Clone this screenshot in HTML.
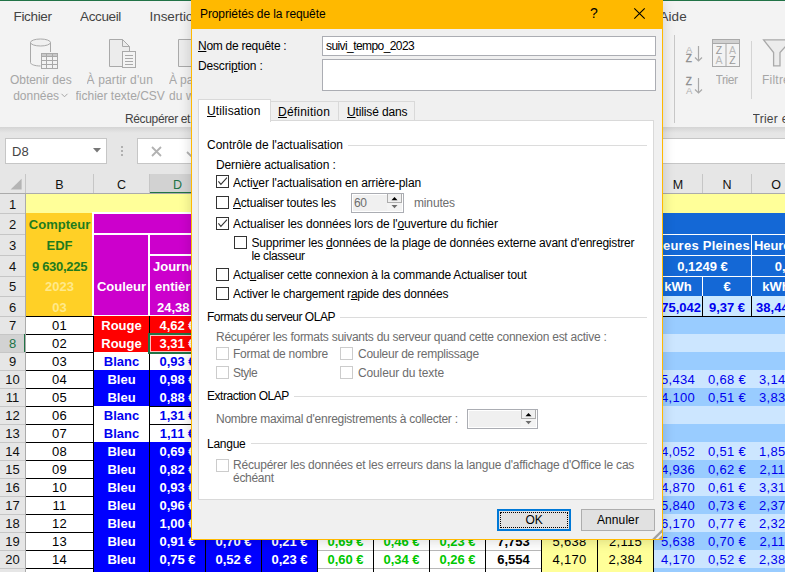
<!DOCTYPE html><html lang="fr"><head><meta charset="utf-8"><title>Propriétés de la requête</title>
<style>
html,body{margin:0;padding:0;}
body{width:785px;height:572px;overflow:hidden;position:relative;background:#e6e6e6;font-family:"Liberation Sans", sans-serif;}
div,span{position:absolute;box-sizing:border-box;}
.t{white-space:nowrap;overflow:hidden;}
svg{position:absolute;overflow:visible;}
u{text-decoration:underline;text-underline-offset:1px;}
.dlg .t{font-size:12px;letter-spacing:-0.2px;color:#000;}
.cb{width:13px;height:13px;background:#fff;border:1px solid #333;}
.cb.dis{border-color:#ccc;background:#fff;}
</style></head><body>
<div id="xl" style="left:0;top:0;width:785px;height:572px;">
<div style="left:0px;top:0px;width:785px;height:127px;background:#f3f3f3;"></div>
<div style="left:0px;top:0px;width:785px;height:1px;background:#217346;"></div>
<div style="left:0px;top:127px;width:785px;height:6px;background:linear-gradient(#d4d4d4,#e6e6e6);"></div>
<div class="t" style="left:13.5px;top:7px;width:300px;height:20px;line-height:20px;color:#444;font-size:13.5px;text-align:left;letter-spacing:-0.33px;">Fichier</div>
<div class="t" style="left:80px;top:7px;width:300px;height:20px;line-height:20px;color:#444;font-size:13.5px;text-align:left;letter-spacing:-0.36px;">Accueil</div>
<div class="t" style="left:149.5px;top:7px;width:300px;height:20px;line-height:20px;color:#444;font-size:13.5px;text-align:left;letter-spacing:-0.06px;">Insertion</div>
<div class="t" style="left:659.5px;top:7px;width:300px;height:20px;line-height:20px;color:#444;font-size:13.5px;text-align:left;letter-spacing:0.04px;">Aide</div>
<div class="t" style="left:10px;top:72px;width:300px;height:16px;line-height:16px;color:#a6a6a6;font-size:12px;text-align:left;letter-spacing:-0.04px;">Obtenir des</div>
<div class="t" style="left:13.2px;top:88px;width:300px;height:16px;line-height:16px;color:#a6a6a6;font-size:12px;text-align:left;letter-spacing:-0.02px;">données</div>
<svg style="left:61px;top:93px" width="7" height="5" viewBox="0 0 7 5" fill="none" stroke="#a6a6a6" stroke-width="1"><path d="M0.5 0.8L3.5 3.8L6.5 0.8"/></svg>
<div class="t" style="left:86.5px;top:72px;width:300px;height:16px;line-height:16px;color:#a6a6a6;font-size:12px;text-align:left;letter-spacing:0.17px;">À partir d'un</div>
<div class="t" style="left:75.5px;top:88px;width:300px;height:16px;line-height:16px;color:#a6a6a6;font-size:12px;text-align:left;letter-spacing:0.0px;">fichier texte/CSV</div>
<div class="t" style="left:169px;top:72px;width:300px;height:16px;line-height:16px;color:#a6a6a6;font-size:12px;text-align:left;letter-spacing:-0.11px;">À partir du</div>
<div class="t" style="left:169px;top:88px;width:300px;height:16px;line-height:16px;color:#a6a6a6;font-size:12px;text-align:left;letter-spacing:0.08px;">du web</div>
<div class="t" style="left:125px;top:111px;width:300px;height:16px;line-height:16px;color:#444;font-size:12px;text-align:left;letter-spacing:-0.36px;">Récupérer et transformer des données</div>
<div class="t" style="left:752.5px;top:111px;width:300px;height:16px;line-height:16px;color:#444;font-size:12px;text-align:left;letter-spacing:0.27px;">Trier et filtrer</div>
<div class="t" style="left:715.5px;top:72px;width:300px;height:16px;line-height:16px;color:#a6a6a6;font-size:12px;text-align:left;letter-spacing:-0.4px;">Trier</div>
<div class="t" style="left:762px;top:72px;width:300px;height:16px;line-height:16px;color:#a6a6a6;font-size:12px;text-align:left;letter-spacing:0.22px;">Filtrer</div>
<div style="left:674px;top:35px;width:1px;height:88px;background:#c8c8c8;"></div>
<div style="left:751px;top:41px;width:1px;height:58px;background:#d4d4d4;"></div>
<svg style="left:28px;top:37px" width="32" height="34" viewBox="0 0 32 34" fill="none" stroke="#a9a9a9" stroke-width="1">
<ellipse cx="12.5" cy="5.5" rx="10" ry="3.5" fill="#f0f0f0"/>
<path d="M2.5 5.5V25.5C2.5 27.5 7 29 12.5 29"/><path d="M22.5 5.5V15"/>
<rect x="13.5" y="16.5" width="16" height="15" fill="#f3f3f3"/>
<rect x="13.5" y="16.5" width="16" height="3" fill="#c8c8c8"/>
<path d="M13.5 19.5H29.5M13.5 23.5H29.5M13.5 27.5H29.5M18.5 16.5V31.5M24.5 16.5V31.5"/></svg>
<svg style="left:108px;top:37px" width="32" height="34" viewBox="0 0 32 34" fill="none" stroke="#a9a9a9" stroke-width="1">
<path d="M1.5 2.5H14.5L21.5 9.5V29.5H1.5Z" fill="#ececec"/><path d="M14.5 2.5V9.5H21.5"/>
<rect x="14.5" y="14.5" width="13" height="16" fill="#f3f3f3"/>
<path d="M17 18.5H25M17 21.5H25M17 24.5H25M17 27.5H25"/></svg>
<svg style="left:177px;top:37px" width="32" height="34" viewBox="0 0 32 34" fill="none" stroke="#a9a9a9" stroke-width="1">
<path d="M1.5 2.5H14.5L21.5 9.5V29.5H1.5Z" fill="#ececec"/></svg>
<svg style="left:685px;top:44px" width="20" height="20" viewBox="0 0 20 20" fill="none" stroke="#a9a9a9" stroke-width="1.2">
<path d="M13.5 2V17M10 13.5L13.5 17L17 13.5"/>
<text x="1" y="9" font-family="Liberation Sans, sans-serif" font-size="9.5" fill="#b0b0b0" stroke="none">A</text>
<text x="0.8" y="18" font-family="Liberation Sans, sans-serif" font-size="10" fill="#8c8c8c" stroke="#8c8c8c" stroke-width="0.3">Z</text></svg>
<svg style="left:685px;top:76px" width="20" height="20" viewBox="0 0 20 20" fill="none" stroke="#a9a9a9" stroke-width="1.2">
<path d="M13.5 2V17M10 13.5L13.5 17L17 13.5"/>
<text x="0.8" y="9" font-family="Liberation Sans, sans-serif" font-size="10" fill="#8c8c8c" stroke="#8c8c8c" stroke-width="0.3">Z</text>
<text x="1" y="18" font-family="Liberation Sans, sans-serif" font-size="9.5" fill="#b0b0b0" stroke="none">A</text></svg>
<svg style="left:712px;top:39px" width="29" height="29" viewBox="0 0 29 29" fill="none" stroke="#a9a9a9" stroke-width="1">
<rect x="0.5" y="0.5" width="27" height="27" fill="#f3f3f3"/><rect x="0.5" y="0.5" width="27" height="4" fill="#d0d0d0"/>
<path d="M14 4.5V27.5"/>
<g font-family="Liberation Sans, sans-serif" font-size="10.5" stroke="none"><text x="3.8" y="15" fill="#999">Z</text><text x="3.5" y="25.2" fill="#b8b8b8">A</text><text x="17" y="15" fill="#b8b8b8">A</text><text x="17.3" y="25.2" fill="#999">Z</text></g></svg>
<svg style="left:763px;top:39px" width="30" height="28" viewBox="0 0 30 28" fill="none" stroke="#a9a9a9" stroke-width="1.3">
<path d="M0.6 0.9H28.4L17 13.5V26.8H10.6V13.5Z" fill="#ececec"/></svg>
<div style="left:5px;top:138px;width:102px;height:26px;background:#fff;border:1px solid #c6c6c6;"></div>
<div class="t" style="left:12px;top:143px;width:40px;height:18px;line-height:18px;color:#444;font-size:13px;text-align:left;">D8</div>
<svg style="left:93px;top:148px" width="8" height="5" viewBox="0 0 8 5"><path d="M0 0H8L4 4.5Z" fill="#777"/></svg>
<div style="left:121px;top:146px;width:2px;height:2px;background:#b0b0b0;"></div>
<div style="left:121px;top:150px;width:2px;height:2px;background:#b0b0b0;"></div>
<div style="left:121px;top:154px;width:2px;height:2px;background:#b0b0b0;"></div>
<div style="left:137px;top:138px;width:660px;height:26px;background:#fff;border:1px solid #c6c6c6;"></div>
<svg style="left:150.5px;top:146px" width="11" height="11" viewBox="0 0 11 11" stroke="#b2b2b2" stroke-width="1.8" fill="none"><path d="M1 1L10 10M10 1L1 10"/></svg>
<svg style="left:186px;top:146px" width="14" height="11" viewBox="0 0 14 11" stroke="#b2b2b2" stroke-width="1.8" fill="none"><path d="M1 6L5 10L13 1"/></svg>
<div style="left:0px;top:174px;width:785px;height:20px;background:#e6e6e6;"></div>
<svg style="left:10px;top:178px" width="12" height="12" viewBox="0 0 12 12"><path d="M11.6 0.8V11.5H0.6Z" fill="#b4b4b4"/></svg>
<div class="t" style="left:26px;top:176px;width:67px;height:18px;line-height:18px;color:#111;font-size:12.5px;text-align:center;">B</div>
<div style="left:93px;top:174px;width:1px;height:20px;background:#c6c6c6;"></div>
<div class="t" style="left:94px;top:176px;width:55px;height:18px;line-height:18px;color:#111;font-size:12.5px;text-align:center;">C</div>
<div style="left:149px;top:174px;width:1px;height:20px;background:#c6c6c6;"></div>
<div style="left:150px;top:174px;width:55px;height:20px;background:#d2d2d2;border-bottom:2px solid #217346;"></div>
<div class="t" style="left:150px;top:176px;width:55px;height:18px;line-height:18px;color:#217346;font-size:12.5px;text-align:center;">D</div>
<div style="left:205px;top:174px;width:1px;height:20px;background:#c6c6c6;"></div>
<div class="t" style="left:206px;top:176px;width:55px;height:18px;line-height:18px;color:#111;font-size:12.5px;text-align:center;">E</div>
<div style="left:261px;top:174px;width:1px;height:20px;background:#c6c6c6;"></div>
<div class="t" style="left:262px;top:176px;width:55px;height:18px;line-height:18px;color:#111;font-size:12.5px;text-align:center;">F</div>
<div style="left:317px;top:174px;width:1px;height:20px;background:#c6c6c6;"></div>
<div class="t" style="left:318px;top:176px;width:55px;height:18px;line-height:18px;color:#111;font-size:12.5px;text-align:center;">G</div>
<div style="left:373px;top:174px;width:1px;height:20px;background:#c6c6c6;"></div>
<div class="t" style="left:374px;top:176px;width:55px;height:18px;line-height:18px;color:#111;font-size:12.5px;text-align:center;">H</div>
<div style="left:429px;top:174px;width:1px;height:20px;background:#c6c6c6;"></div>
<div class="t" style="left:430px;top:176px;width:55px;height:18px;line-height:18px;color:#111;font-size:12.5px;text-align:center;">I</div>
<div style="left:485px;top:174px;width:1px;height:20px;background:#c6c6c6;"></div>
<div class="t" style="left:486px;top:176px;width:55px;height:18px;line-height:18px;color:#111;font-size:12.5px;text-align:center;">J</div>
<div style="left:541px;top:174px;width:1px;height:20px;background:#c6c6c6;"></div>
<div class="t" style="left:542px;top:176px;width:55px;height:18px;line-height:18px;color:#111;font-size:12.5px;text-align:center;">K</div>
<div style="left:597px;top:174px;width:1px;height:20px;background:#c6c6c6;"></div>
<div class="t" style="left:598px;top:176px;width:55px;height:18px;line-height:18px;color:#111;font-size:12.5px;text-align:center;">L</div>
<div style="left:653px;top:174px;width:1px;height:20px;background:#c6c6c6;"></div>
<div class="t" style="left:654px;top:176px;width:48px;height:18px;line-height:18px;color:#111;font-size:12.5px;text-align:center;">M</div>
<div style="left:702px;top:174px;width:1px;height:20px;background:#c6c6c6;"></div>
<div class="t" style="left:703px;top:176px;width:48px;height:18px;line-height:18px;color:#111;font-size:12.5px;text-align:center;">N</div>
<div style="left:751px;top:174px;width:1px;height:20px;background:#c6c6c6;"></div>
<div class="t" style="left:752px;top:176px;width:48px;height:18px;line-height:18px;color:#111;font-size:12.5px;text-align:center;">O</div>
<div style="left:800px;top:174px;width:1px;height:20px;background:#c6c6c6;"></div>
<div style="left:25px;top:174px;width:1px;height:20px;background:#c6c6c6;"></div>
<div style="left:0px;top:193px;width:785px;height:1px;background:#ababab;"></div>
<div class="t" style="left:0px;top:196px;width:25px;height:17px;line-height:17px;color:#111;font-size:13px;text-align:center;">1</div>
<div style="left:0px;top:213px;width:25px;height:1px;background:#c6c6c6;"></div>
<div class="t" style="left:0px;top:216px;width:25px;height:17px;line-height:17px;color:#111;font-size:13px;text-align:center;">2</div>
<div style="left:0px;top:234px;width:25px;height:1px;background:#c6c6c6;"></div>
<div class="t" style="left:0px;top:237px;width:25px;height:17px;line-height:17px;color:#111;font-size:13px;text-align:center;">3</div>
<div style="left:0px;top:255px;width:25px;height:1px;background:#c6c6c6;"></div>
<div class="t" style="left:0px;top:258px;width:25px;height:17px;line-height:17px;color:#111;font-size:13px;text-align:center;">4</div>
<div style="left:0px;top:276px;width:25px;height:1px;background:#c6c6c6;"></div>
<div class="t" style="left:0px;top:278px;width:25px;height:17px;line-height:17px;color:#111;font-size:13px;text-align:center;">5</div>
<div style="left:0px;top:296px;width:25px;height:1px;background:#c6c6c6;"></div>
<div class="t" style="left:0px;top:299px;width:25px;height:17px;line-height:17px;color:#111;font-size:13px;text-align:center;">6</div>
<div style="left:0px;top:316px;width:25px;height:1px;background:#c6c6c6;"></div>
<div class="t" style="left:0px;top:317px;width:25px;height:17px;line-height:17px;color:#111;font-size:13px;text-align:center;">7</div>
<div style="left:0px;top:334px;width:25px;height:1px;background:#c6c6c6;"></div>
<div style="left:0px;top:335px;width:26px;height:17px;background:#d2d2d2;"></div>
<div style="left:24px;top:334px;width:2px;height:19px;background:#217346;"></div>
<div class="t" style="left:0px;top:335px;width:25px;height:17px;line-height:17px;color:#217346;font-size:13px;text-align:center;">8</div>
<div style="left:0px;top:352px;width:25px;height:1px;background:#c6c6c6;"></div>
<div class="t" style="left:0px;top:353px;width:25px;height:17px;line-height:17px;color:#111;font-size:13px;text-align:center;">9</div>
<div style="left:0px;top:370px;width:25px;height:1px;background:#c6c6c6;"></div>
<div class="t" style="left:0px;top:371px;width:25px;height:17px;line-height:17px;color:#111;font-size:13px;text-align:center;">10</div>
<div style="left:0px;top:388px;width:25px;height:1px;background:#c6c6c6;"></div>
<div class="t" style="left:0px;top:389px;width:25px;height:17px;line-height:17px;color:#111;font-size:13px;text-align:center;">11</div>
<div style="left:0px;top:406px;width:25px;height:1px;background:#c6c6c6;"></div>
<div class="t" style="left:0px;top:407px;width:25px;height:17px;line-height:17px;color:#111;font-size:13px;text-align:center;">12</div>
<div style="left:0px;top:424px;width:25px;height:1px;background:#c6c6c6;"></div>
<div class="t" style="left:0px;top:425px;width:25px;height:17px;line-height:17px;color:#111;font-size:13px;text-align:center;">13</div>
<div style="left:0px;top:442px;width:25px;height:1px;background:#c6c6c6;"></div>
<div class="t" style="left:0px;top:443px;width:25px;height:17px;line-height:17px;color:#111;font-size:13px;text-align:center;">14</div>
<div style="left:0px;top:460px;width:25px;height:1px;background:#c6c6c6;"></div>
<div class="t" style="left:0px;top:461px;width:25px;height:17px;line-height:17px;color:#111;font-size:13px;text-align:center;">15</div>
<div style="left:0px;top:478px;width:25px;height:1px;background:#c6c6c6;"></div>
<div class="t" style="left:0px;top:479px;width:25px;height:17px;line-height:17px;color:#111;font-size:13px;text-align:center;">16</div>
<div style="left:0px;top:496px;width:25px;height:1px;background:#c6c6c6;"></div>
<div class="t" style="left:0px;top:497px;width:25px;height:17px;line-height:17px;color:#111;font-size:13px;text-align:center;">17</div>
<div style="left:0px;top:514px;width:25px;height:1px;background:#c6c6c6;"></div>
<div class="t" style="left:0px;top:515px;width:25px;height:17px;line-height:17px;color:#111;font-size:13px;text-align:center;">18</div>
<div style="left:0px;top:532px;width:25px;height:1px;background:#c6c6c6;"></div>
<div class="t" style="left:0px;top:533px;width:25px;height:17px;line-height:17px;color:#111;font-size:13px;text-align:center;">19</div>
<div style="left:0px;top:550px;width:25px;height:1px;background:#c6c6c6;"></div>
<div class="t" style="left:0px;top:551px;width:25px;height:17px;line-height:17px;color:#111;font-size:13px;text-align:center;">20</div>
<div style="left:0px;top:568px;width:25px;height:1px;background:#c6c6c6;"></div>
<div class="t" style="left:0px;top:569px;width:25px;height:17px;line-height:17px;color:#111;font-size:13px;text-align:center;">21</div>
<div style="left:0px;top:586px;width:25px;height:1px;background:#c6c6c6;"></div>
<div style="left:25px;top:194px;width:1px;height:400px;background:#ababab;"></div>
<div style="left:26px;top:194px;width:759px;height:378px;background:#fff;"></div>
<div style="left:26px;top:194px;width:759px;height:19px;background:#ffff99;"></div>
<div style="left:92px;top:212px;width:562px;height:1px;background:#fff;"></div>
<div style="left:26px;top:213px;width:66px;height:103px;background:#ffd026;"></div>
<div class="t" style="left:26px;top:216px;width:67px;height:17px;line-height:17px;color:#1e7b1e;font-size:13px;text-align:center;font-weight:bold;">Compteur</div>
<div class="t" style="left:26px;top:237px;width:67px;height:17px;line-height:17px;color:#1e7b1e;font-size:13px;text-align:center;font-weight:bold;">EDF</div>
<div class="t" style="left:26px;top:258px;width:67px;height:17px;line-height:17px;color:#1e7b1e;font-size:13px;text-align:center;font-weight:bold;letter-spacing:-0.3px;">9 630,225</div>
<div class="t" style="left:26px;top:278px;width:67px;height:17px;line-height:17px;color:#ffe98a;font-size:13px;text-align:center;font-weight:bold;">2023</div>
<div class="t" style="left:26px;top:299px;width:67px;height:17px;line-height:17px;color:#ffe98a;font-size:13px;text-align:center;font-weight:bold;">03</div>
<div style="left:94px;top:214px;width:600px;height:19px;background:#cc00cc;"></div>
<div style="left:94px;top:235px;width:54px;height:80px;background:#cc00cc;"></div>
<div style="left:150px;top:235px;width:600px;height:19px;background:#cc00cc;"></div>
<div style="left:150px;top:256px;width:600px;height:59px;background:#cc00cc;"></div>
<div class="t" style="left:94px;top:278px;width:55px;height:17px;line-height:17px;color:#fff;font-size:13px;text-align:center;font-weight:bold;">Couleur</div>
<div class="t" style="left:153px;top:258px;width:80px;height:17px;line-height:17px;color:#fff;font-size:13px;text-align:left;font-weight:bold;">Journée</div>
<div class="t" style="left:155px;top:278px;width:80px;height:17px;line-height:17px;color:#fff;font-size:13px;text-align:left;font-weight:bold;">entière</div>
<div class="t" style="left:157px;top:299px;width:80px;height:17px;line-height:17px;color:#fff;font-size:13px;text-align:left;font-weight:bold;">24,38 €</div>
<div style="left:26px;top:316px;width:67px;height:1px;background:#000;"></div>
<div style="left:26px;top:334px;width:67px;height:1px;background:#000;"></div>
<div style="left:93px;top:316px;width:1px;height:19px;background:#000;"></div>
<div class="t" style="left:26px;top:317px;width:67px;height:17px;line-height:17px;color:#000;font-size:13px;text-align:center;letter-spacing:0.3px;">01</div>
<div style="left:94px;top:316px;width:112px;height:18px;background:#ff0000;"></div>
<div style="left:149px;top:316px;width:1px;height:18px;background:#000;"></div>
<div style="left:205px;top:316px;width:1px;height:18px;background:#000;"></div>
<div class="t" style="left:94px;top:317px;width:55px;height:17px;line-height:17px;color:#fff;font-size:13px;text-align:center;font-weight:bold;">Rouge</div>
<div class="t" style="left:150px;top:317px;width:55px;height:17px;line-height:17px;color:#fff;font-size:13px;text-align:center;font-weight:bold;">4,62 €</div>
<div style="left:26px;top:334px;width:67px;height:1px;background:#000;"></div>
<div style="left:26px;top:352px;width:67px;height:1px;background:#000;"></div>
<div style="left:93px;top:334px;width:1px;height:19px;background:#000;"></div>
<div class="t" style="left:26px;top:335px;width:67px;height:17px;line-height:17px;color:#000;font-size:13px;text-align:center;letter-spacing:0.3px;">02</div>
<div style="left:94px;top:334px;width:112px;height:18px;background:#ff0000;"></div>
<div style="left:149px;top:334px;width:1px;height:18px;background:#000;"></div>
<div style="left:205px;top:334px;width:1px;height:18px;background:#000;"></div>
<div class="t" style="left:94px;top:335px;width:55px;height:17px;line-height:17px;color:#fff;font-size:13px;text-align:center;font-weight:bold;">Rouge</div>
<div class="t" style="left:150px;top:335px;width:55px;height:17px;line-height:17px;color:#fff;font-size:13px;text-align:center;font-weight:bold;">3,31 €</div>
<div style="left:26px;top:352px;width:67px;height:1px;background:#000;"></div>
<div style="left:26px;top:370px;width:67px;height:1px;background:#000;"></div>
<div style="left:93px;top:352px;width:1px;height:19px;background:#000;"></div>
<div class="t" style="left:26px;top:353px;width:67px;height:17px;line-height:17px;color:#000;font-size:13px;text-align:center;letter-spacing:0.3px;">03</div>
<div style="left:94px;top:352px;width:112px;height:18px;background:#fff;"></div>
<div style="left:149px;top:352px;width:1px;height:18px;background:#000;"></div>
<div style="left:205px;top:352px;width:1px;height:18px;background:#000;"></div>
<div class="t" style="left:94px;top:353px;width:55px;height:17px;line-height:17px;color:#0000f0;font-size:13px;text-align:center;font-weight:bold;">Blanc</div>
<div class="t" style="left:150px;top:353px;width:55px;height:17px;line-height:17px;color:#0000f0;font-size:13px;text-align:center;font-weight:bold;">0,93 €</div>
<div style="left:150px;top:352px;width:55px;height:1px;background:#000;"></div>
<div style="left:150px;top:370px;width:55px;height:1px;background:#000;"></div>
<div style="left:26px;top:370px;width:67px;height:1px;background:#000;"></div>
<div style="left:26px;top:388px;width:67px;height:1px;background:#000;"></div>
<div style="left:93px;top:370px;width:1px;height:19px;background:#000;"></div>
<div class="t" style="left:26px;top:371px;width:67px;height:17px;line-height:17px;color:#000;font-size:13px;text-align:center;letter-spacing:0.3px;">04</div>
<div style="left:94px;top:370px;width:112px;height:18px;background:#0000ff;"></div>
<div style="left:149px;top:370px;width:1px;height:18px;background:#000;"></div>
<div style="left:205px;top:370px;width:1px;height:18px;background:#000;"></div>
<div class="t" style="left:94px;top:371px;width:55px;height:17px;line-height:17px;color:#fff;font-size:13px;text-align:center;font-weight:bold;">Bleu</div>
<div class="t" style="left:150px;top:371px;width:55px;height:17px;line-height:17px;color:#fff;font-size:13px;text-align:center;font-weight:bold;">0,98 €</div>
<div style="left:26px;top:388px;width:67px;height:1px;background:#000;"></div>
<div style="left:26px;top:406px;width:67px;height:1px;background:#000;"></div>
<div style="left:93px;top:388px;width:1px;height:19px;background:#000;"></div>
<div class="t" style="left:26px;top:389px;width:67px;height:17px;line-height:17px;color:#000;font-size:13px;text-align:center;letter-spacing:0.3px;">05</div>
<div style="left:94px;top:388px;width:112px;height:18px;background:#0000ff;"></div>
<div style="left:149px;top:388px;width:1px;height:18px;background:#000;"></div>
<div style="left:205px;top:388px;width:1px;height:18px;background:#000;"></div>
<div class="t" style="left:94px;top:389px;width:55px;height:17px;line-height:17px;color:#fff;font-size:13px;text-align:center;font-weight:bold;">Bleu</div>
<div class="t" style="left:150px;top:389px;width:55px;height:17px;line-height:17px;color:#fff;font-size:13px;text-align:center;font-weight:bold;">0,88 €</div>
<div style="left:26px;top:406px;width:67px;height:1px;background:#000;"></div>
<div style="left:26px;top:424px;width:67px;height:1px;background:#000;"></div>
<div style="left:93px;top:406px;width:1px;height:19px;background:#000;"></div>
<div class="t" style="left:26px;top:407px;width:67px;height:17px;line-height:17px;color:#000;font-size:13px;text-align:center;letter-spacing:0.3px;">06</div>
<div style="left:94px;top:406px;width:112px;height:18px;background:#fff;"></div>
<div style="left:149px;top:406px;width:1px;height:18px;background:#000;"></div>
<div style="left:205px;top:406px;width:1px;height:18px;background:#000;"></div>
<div class="t" style="left:94px;top:407px;width:55px;height:17px;line-height:17px;color:#0000f0;font-size:13px;text-align:center;font-weight:bold;">Blanc</div>
<div class="t" style="left:150px;top:407px;width:55px;height:17px;line-height:17px;color:#0000f0;font-size:13px;text-align:center;font-weight:bold;">1,31 €</div>
<div style="left:150px;top:406px;width:55px;height:1px;background:#000;"></div>
<div style="left:150px;top:424px;width:55px;height:1px;background:#000;"></div>
<div style="left:26px;top:424px;width:67px;height:1px;background:#000;"></div>
<div style="left:26px;top:442px;width:67px;height:1px;background:#000;"></div>
<div style="left:93px;top:424px;width:1px;height:19px;background:#000;"></div>
<div class="t" style="left:26px;top:425px;width:67px;height:17px;line-height:17px;color:#000;font-size:13px;text-align:center;letter-spacing:0.3px;">07</div>
<div style="left:94px;top:424px;width:112px;height:18px;background:#fff;"></div>
<div style="left:149px;top:424px;width:1px;height:18px;background:#000;"></div>
<div style="left:205px;top:424px;width:1px;height:18px;background:#000;"></div>
<div class="t" style="left:94px;top:425px;width:55px;height:17px;line-height:17px;color:#0000f0;font-size:13px;text-align:center;font-weight:bold;">Blanc</div>
<div class="t" style="left:150px;top:425px;width:55px;height:17px;line-height:17px;color:#0000f0;font-size:13px;text-align:center;font-weight:bold;">1,11 €</div>
<div style="left:150px;top:424px;width:55px;height:1px;background:#000;"></div>
<div style="left:150px;top:442px;width:55px;height:1px;background:#000;"></div>
<div style="left:26px;top:442px;width:67px;height:1px;background:#000;"></div>
<div style="left:26px;top:460px;width:67px;height:1px;background:#000;"></div>
<div style="left:93px;top:442px;width:1px;height:19px;background:#000;"></div>
<div class="t" style="left:26px;top:443px;width:67px;height:17px;line-height:17px;color:#000;font-size:13px;text-align:center;letter-spacing:0.3px;">08</div>
<div style="left:94px;top:442px;width:112px;height:18px;background:#0000ff;"></div>
<div style="left:149px;top:442px;width:1px;height:18px;background:#000;"></div>
<div style="left:205px;top:442px;width:1px;height:18px;background:#000;"></div>
<div class="t" style="left:94px;top:443px;width:55px;height:17px;line-height:17px;color:#fff;font-size:13px;text-align:center;font-weight:bold;">Bleu</div>
<div class="t" style="left:150px;top:443px;width:55px;height:17px;line-height:17px;color:#fff;font-size:13px;text-align:center;font-weight:bold;">0,69 €</div>
<div style="left:26px;top:460px;width:67px;height:1px;background:#000;"></div>
<div style="left:26px;top:478px;width:67px;height:1px;background:#000;"></div>
<div style="left:93px;top:460px;width:1px;height:19px;background:#000;"></div>
<div class="t" style="left:26px;top:461px;width:67px;height:17px;line-height:17px;color:#000;font-size:13px;text-align:center;letter-spacing:0.3px;">09</div>
<div style="left:94px;top:460px;width:112px;height:18px;background:#0000ff;"></div>
<div style="left:149px;top:460px;width:1px;height:18px;background:#000;"></div>
<div style="left:205px;top:460px;width:1px;height:18px;background:#000;"></div>
<div class="t" style="left:94px;top:461px;width:55px;height:17px;line-height:17px;color:#fff;font-size:13px;text-align:center;font-weight:bold;">Bleu</div>
<div class="t" style="left:150px;top:461px;width:55px;height:17px;line-height:17px;color:#fff;font-size:13px;text-align:center;font-weight:bold;">0,82 €</div>
<div style="left:26px;top:478px;width:67px;height:1px;background:#000;"></div>
<div style="left:26px;top:496px;width:67px;height:1px;background:#000;"></div>
<div style="left:93px;top:478px;width:1px;height:19px;background:#000;"></div>
<div class="t" style="left:26px;top:479px;width:67px;height:17px;line-height:17px;color:#000;font-size:13px;text-align:center;letter-spacing:0.3px;">10</div>
<div style="left:94px;top:478px;width:112px;height:18px;background:#0000ff;"></div>
<div style="left:149px;top:478px;width:1px;height:18px;background:#000;"></div>
<div style="left:205px;top:478px;width:1px;height:18px;background:#000;"></div>
<div class="t" style="left:94px;top:479px;width:55px;height:17px;line-height:17px;color:#fff;font-size:13px;text-align:center;font-weight:bold;">Bleu</div>
<div class="t" style="left:150px;top:479px;width:55px;height:17px;line-height:17px;color:#fff;font-size:13px;text-align:center;font-weight:bold;">0,93 €</div>
<div style="left:26px;top:496px;width:67px;height:1px;background:#000;"></div>
<div style="left:26px;top:514px;width:67px;height:1px;background:#000;"></div>
<div style="left:93px;top:496px;width:1px;height:19px;background:#000;"></div>
<div class="t" style="left:26px;top:497px;width:67px;height:17px;line-height:17px;color:#000;font-size:13px;text-align:center;letter-spacing:0.3px;">11</div>
<div style="left:94px;top:496px;width:112px;height:18px;background:#0000ff;"></div>
<div style="left:149px;top:496px;width:1px;height:18px;background:#000;"></div>
<div style="left:205px;top:496px;width:1px;height:18px;background:#000;"></div>
<div class="t" style="left:94px;top:497px;width:55px;height:17px;line-height:17px;color:#fff;font-size:13px;text-align:center;font-weight:bold;">Bleu</div>
<div class="t" style="left:150px;top:497px;width:55px;height:17px;line-height:17px;color:#fff;font-size:13px;text-align:center;font-weight:bold;">0,96 €</div>
<div style="left:26px;top:514px;width:67px;height:1px;background:#000;"></div>
<div style="left:26px;top:532px;width:67px;height:1px;background:#000;"></div>
<div style="left:93px;top:514px;width:1px;height:19px;background:#000;"></div>
<div class="t" style="left:26px;top:515px;width:67px;height:17px;line-height:17px;color:#000;font-size:13px;text-align:center;letter-spacing:0.3px;">12</div>
<div style="left:94px;top:514px;width:112px;height:18px;background:#0000ff;"></div>
<div style="left:149px;top:514px;width:1px;height:18px;background:#000;"></div>
<div style="left:205px;top:514px;width:1px;height:18px;background:#000;"></div>
<div class="t" style="left:94px;top:515px;width:55px;height:17px;line-height:17px;color:#fff;font-size:13px;text-align:center;font-weight:bold;">Bleu</div>
<div class="t" style="left:150px;top:515px;width:55px;height:17px;line-height:17px;color:#fff;font-size:13px;text-align:center;font-weight:bold;">1,00 €</div>
<div style="left:26px;top:532px;width:67px;height:1px;background:#000;"></div>
<div style="left:26px;top:550px;width:67px;height:1px;background:#000;"></div>
<div style="left:93px;top:532px;width:1px;height:19px;background:#000;"></div>
<div class="t" style="left:26px;top:533px;width:67px;height:17px;line-height:17px;color:#000;font-size:13px;text-align:center;letter-spacing:0.3px;">13</div>
<div style="left:94px;top:532px;width:112px;height:18px;background:#0000ff;"></div>
<div style="left:149px;top:532px;width:1px;height:18px;background:#000;"></div>
<div style="left:205px;top:532px;width:1px;height:18px;background:#000;"></div>
<div class="t" style="left:94px;top:533px;width:55px;height:17px;line-height:17px;color:#fff;font-size:13px;text-align:center;font-weight:bold;">Bleu</div>
<div class="t" style="left:150px;top:533px;width:55px;height:17px;line-height:17px;color:#fff;font-size:13px;text-align:center;font-weight:bold;">0,91 €</div>
<div style="left:206px;top:532px;width:56px;height:18px;background:#0000ff;"></div>
<div style="left:261px;top:532px;width:1px;height:18px;background:#000;"></div>
<div class="t" style="left:206px;top:533px;width:55px;height:17px;line-height:17px;color:#fff;font-size:13px;text-align:center;font-weight:bold;">0,70 €</div>
<div style="left:262px;top:532px;width:56px;height:18px;background:#0000ff;"></div>
<div style="left:317px;top:532px;width:1px;height:18px;background:#000;"></div>
<div class="t" style="left:262px;top:533px;width:55px;height:17px;line-height:17px;color:#fff;font-size:13px;text-align:center;font-weight:bold;">0,21 €</div>
<div style="left:373px;top:532px;width:1px;height:18px;background:#000;"></div>
<div style="left:318px;top:550px;width:55px;height:1px;background:#b8b8b8;"></div>
<div class="t" style="left:318px;top:533px;width:55px;height:17px;line-height:17px;color:#00c800;font-size:13px;text-align:center;font-weight:bold;">0,69 €</div>
<div style="left:429px;top:532px;width:1px;height:18px;background:#000;"></div>
<div style="left:374px;top:550px;width:55px;height:1px;background:#b8b8b8;"></div>
<div class="t" style="left:374px;top:533px;width:55px;height:17px;line-height:17px;color:#00c800;font-size:13px;text-align:center;font-weight:bold;">0,46 €</div>
<div style="left:485px;top:532px;width:1px;height:18px;background:#000;"></div>
<div style="left:430px;top:550px;width:55px;height:1px;background:#b8b8b8;"></div>
<div class="t" style="left:430px;top:533px;width:55px;height:17px;line-height:17px;color:#00c800;font-size:13px;text-align:center;font-weight:bold;">0,23 €</div>
<div style="left:541px;top:532px;width:1px;height:18px;background:#000;"></div>
<div style="left:486px;top:550px;width:55px;height:1px;background:#b8b8b8;"></div>
<div class="t" style="left:486px;top:533px;width:55px;height:17px;line-height:17px;color:#000;font-size:13px;text-align:center;font-weight:bold;">7,753</div>
<div style="left:542px;top:532px;width:55px;height:18px;background:#ffff99;"></div>
<div style="left:597px;top:532px;width:1px;height:18px;background:#000;"></div>
<div class="t" style="left:542px;top:533px;width:55px;height:17px;line-height:17px;color:#000;font-size:13px;text-align:center;letter-spacing:0.3px;">5,638</div>
<div style="left:598px;top:532px;width:55px;height:18px;background:#ffff99;"></div>
<div style="left:653px;top:532px;width:1px;height:18px;background:#000;"></div>
<div class="t" style="left:598px;top:533px;width:55px;height:17px;line-height:17px;color:#000;font-size:13px;text-align:center;letter-spacing:0.3px;">2,115</div>
<div style="left:26px;top:550px;width:67px;height:1px;background:#000;"></div>
<div style="left:26px;top:568px;width:67px;height:1px;background:#000;"></div>
<div style="left:93px;top:550px;width:1px;height:19px;background:#000;"></div>
<div class="t" style="left:26px;top:551px;width:67px;height:17px;line-height:17px;color:#000;font-size:13px;text-align:center;letter-spacing:0.3px;">14</div>
<div style="left:94px;top:550px;width:112px;height:18px;background:#0000ff;"></div>
<div style="left:149px;top:550px;width:1px;height:18px;background:#000;"></div>
<div style="left:205px;top:550px;width:1px;height:18px;background:#000;"></div>
<div class="t" style="left:94px;top:551px;width:55px;height:17px;line-height:17px;color:#fff;font-size:13px;text-align:center;font-weight:bold;">Bleu</div>
<div class="t" style="left:150px;top:551px;width:55px;height:17px;line-height:17px;color:#fff;font-size:13px;text-align:center;font-weight:bold;">0,75 €</div>
<div style="left:206px;top:550px;width:56px;height:18px;background:#0000ff;"></div>
<div style="left:261px;top:550px;width:1px;height:18px;background:#000;"></div>
<div class="t" style="left:206px;top:551px;width:55px;height:17px;line-height:17px;color:#fff;font-size:13px;text-align:center;font-weight:bold;">0,52 €</div>
<div style="left:262px;top:550px;width:56px;height:18px;background:#0000ff;"></div>
<div style="left:317px;top:550px;width:1px;height:18px;background:#000;"></div>
<div class="t" style="left:262px;top:551px;width:55px;height:17px;line-height:17px;color:#fff;font-size:13px;text-align:center;font-weight:bold;">0,23 €</div>
<div style="left:373px;top:550px;width:1px;height:18px;background:#000;"></div>
<div style="left:318px;top:568px;width:55px;height:1px;background:#b8b8b8;"></div>
<div class="t" style="left:318px;top:551px;width:55px;height:17px;line-height:17px;color:#00c800;font-size:13px;text-align:center;font-weight:bold;">0,60 €</div>
<div style="left:429px;top:550px;width:1px;height:18px;background:#000;"></div>
<div style="left:374px;top:568px;width:55px;height:1px;background:#b8b8b8;"></div>
<div class="t" style="left:374px;top:551px;width:55px;height:17px;line-height:17px;color:#00c800;font-size:13px;text-align:center;font-weight:bold;">0,34 €</div>
<div style="left:485px;top:550px;width:1px;height:18px;background:#000;"></div>
<div style="left:430px;top:568px;width:55px;height:1px;background:#b8b8b8;"></div>
<div class="t" style="left:430px;top:551px;width:55px;height:17px;line-height:17px;color:#00c800;font-size:13px;text-align:center;font-weight:bold;">0,26 €</div>
<div style="left:541px;top:550px;width:1px;height:18px;background:#000;"></div>
<div style="left:486px;top:568px;width:55px;height:1px;background:#b8b8b8;"></div>
<div class="t" style="left:486px;top:551px;width:55px;height:17px;line-height:17px;color:#000;font-size:13px;text-align:center;font-weight:bold;">6,554</div>
<div style="left:542px;top:550px;width:55px;height:18px;background:#ffff99;"></div>
<div style="left:597px;top:550px;width:1px;height:18px;background:#000;"></div>
<div class="t" style="left:542px;top:551px;width:55px;height:17px;line-height:17px;color:#000;font-size:13px;text-align:center;letter-spacing:0.3px;">4,170</div>
<div style="left:598px;top:550px;width:55px;height:18px;background:#ffff99;"></div>
<div style="left:653px;top:550px;width:1px;height:18px;background:#000;"></div>
<div class="t" style="left:598px;top:551px;width:55px;height:17px;line-height:17px;color:#000;font-size:13px;text-align:center;letter-spacing:0.3px;">2,384</div>
<div style="left:26px;top:568px;width:67px;height:1px;background:#000;"></div>
<div style="left:26px;top:586px;width:67px;height:1px;background:#000;"></div>
<div style="left:93px;top:568px;width:1px;height:19px;background:#000;"></div>
<div class="t" style="left:26px;top:569px;width:67px;height:17px;line-height:17px;color:#000;font-size:13px;text-align:center;letter-spacing:0.3px;">15</div>
<div style="left:94px;top:568px;width:112px;height:18px;background:#0000ff;"></div>
<div style="left:149px;top:568px;width:1px;height:18px;background:#000;"></div>
<div style="left:205px;top:568px;width:1px;height:18px;background:#000;"></div>
<div class="t" style="left:94px;top:569px;width:55px;height:17px;line-height:17px;color:#fff;font-size:13px;text-align:center;font-weight:bold;">Bleu</div>
<div class="t" style="left:150px;top:569px;width:55px;height:17px;line-height:17px;color:#fff;font-size:13px;text-align:center;font-weight:bold;">0,80 €</div>
<div style="left:206px;top:568px;width:56px;height:18px;background:#0000ff;"></div>
<div style="left:261px;top:568px;width:1px;height:18px;background:#000;"></div>
<div class="t" style="left:206px;top:569px;width:55px;height:17px;line-height:17px;color:#fff;font-size:13px;text-align:center;font-weight:bold;">0,55 €</div>
<div style="left:262px;top:568px;width:56px;height:18px;background:#0000ff;"></div>
<div style="left:317px;top:568px;width:1px;height:18px;background:#000;"></div>
<div class="t" style="left:262px;top:569px;width:55px;height:17px;line-height:17px;color:#fff;font-size:13px;text-align:center;font-weight:bold;">0,25 €</div>
<div style="left:373px;top:568px;width:1px;height:18px;background:#000;"></div>
<div style="left:318px;top:586px;width:55px;height:1px;background:#b8b8b8;"></div>
<div class="t" style="left:318px;top:569px;width:55px;height:17px;line-height:17px;color:#00c800;font-size:13px;text-align:center;font-weight:bold;">0,64 €</div>
<div style="left:429px;top:568px;width:1px;height:18px;background:#000;"></div>
<div style="left:374px;top:586px;width:55px;height:1px;background:#b8b8b8;"></div>
<div class="t" style="left:374px;top:569px;width:55px;height:17px;line-height:17px;color:#00c800;font-size:13px;text-align:center;font-weight:bold;">0,38 €</div>
<div style="left:485px;top:568px;width:1px;height:18px;background:#000;"></div>
<div style="left:430px;top:586px;width:55px;height:1px;background:#b8b8b8;"></div>
<div class="t" style="left:430px;top:569px;width:55px;height:17px;line-height:17px;color:#00c800;font-size:13px;text-align:center;font-weight:bold;">0,26 €</div>
<div style="left:541px;top:568px;width:1px;height:18px;background:#000;"></div>
<div style="left:486px;top:586px;width:55px;height:1px;background:#b8b8b8;"></div>
<div class="t" style="left:486px;top:569px;width:55px;height:17px;line-height:17px;color:#000;font-size:13px;text-align:center;font-weight:bold;">7,012</div>
<div style="left:542px;top:568px;width:55px;height:18px;background:#ffff99;"></div>
<div style="left:597px;top:568px;width:1px;height:18px;background:#000;"></div>
<div class="t" style="left:542px;top:569px;width:55px;height:17px;line-height:17px;color:#000;font-size:13px;text-align:center;letter-spacing:0.3px;">4,400</div>
<div style="left:598px;top:568px;width:55px;height:18px;background:#ffff99;"></div>
<div style="left:653px;top:568px;width:1px;height:18px;background:#000;"></div>
<div class="t" style="left:598px;top:569px;width:55px;height:17px;line-height:17px;color:#000;font-size:13px;text-align:center;letter-spacing:0.3px;">2,612</div>
<div style="left:148px;top:333px;width:59px;height:21px;border:2px solid #217346;"></div>
<div style="left:150px;top:335px;width:55px;height:17px;border:1px solid rgba(255,255,255,.75);"></div>
<div style="left:654px;top:213px;width:140px;height:83px;background:#1468d6;"></div>
<div style="left:654px;top:234px;width:140px;height:1px;background:#fff;"></div>
<div style="left:654px;top:255px;width:140px;height:1px;background:#fff;"></div>
<div style="left:654px;top:276px;width:140px;height:1px;background:#fff;"></div>
<div style="left:751px;top:235px;width:1px;height:61px;background:#fff;"></div>
<div style="left:702px;top:277px;width:1px;height:19px;background:#fff;"></div>
<div class="t" style="left:600px;top:237px;width:150px;height:17px;line-height:17px;color:#fff;font-size:13px;text-align:right;font-weight:bold;letter-spacing:0.25px;">Heures Pleines</div>
<div class="t" style="left:754px;top:237px;width:120px;height:17px;line-height:17px;color:#fff;font-size:13px;text-align:left;font-weight:bold;letter-spacing:-0.1px;">Heures Creuses</div>
<div class="t" style="left:654px;top:258px;width:97px;height:17px;line-height:17px;color:#fff;font-size:13px;text-align:center;font-weight:bold;">0,1249 €</div>
<div class="t" style="left:752px;top:258px;width:96px;height:17px;line-height:17px;color:#fff;font-size:13px;text-align:center;font-weight:bold;">0,0969 €</div>
<div class="t" style="left:654px;top:278px;width:48px;height:17px;line-height:17px;color:#fff;font-size:13px;text-align:center;font-weight:bold;">kWh</div>
<div class="t" style="left:703px;top:278px;width:48px;height:17px;line-height:17px;color:#fff;font-size:13px;text-align:center;font-weight:bold;">€</div>
<div class="t" style="left:752px;top:278px;width:48px;height:17px;line-height:17px;color:#fff;font-size:13px;text-align:center;font-weight:bold;">kWh</div>
<div style="left:654px;top:296px;width:140px;height:20px;background:#cce9ff;"></div>
<div style="left:654px;top:316px;width:140px;height:1px;background:#000;"></div>
<div style="left:702px;top:296px;width:1px;height:20px;background:#000;"></div>
<div style="left:751px;top:296px;width:1px;height:20px;background:#000;"></div>
<div class="t" style="left:640px;top:299px;width:61px;height:17px;line-height:17px;color:#0000ee;font-size:13px;text-align:right;font-weight:bold;">75,042</div>
<div class="t" style="left:703px;top:299px;width:48px;height:17px;line-height:17px;color:#0000ee;font-size:13px;text-align:center;font-weight:bold;">9,37 €</div>
<div class="t" style="left:752px;top:299px;width:48px;height:17px;line-height:17px;color:#0000ee;font-size:13px;text-align:center;font-weight:bold;overflow:visible;">38,445</div>
<div style="left:654px;top:317px;width:140px;height:18px;background:#99ccff;"></div>
<div style="left:654px;top:334px;width:140px;height:18px;background:#cce6ff;"></div>
<div style="left:654px;top:352px;width:140px;height:18px;background:#99ccff;"></div>
<div style="left:654px;top:370px;width:140px;height:18px;background:#cce6ff;"></div>
<div class="t" style="left:654px;top:371px;width:48px;height:17px;line-height:17px;color:#0000ee;font-size:13px;text-align:center;letter-spacing:0.3px;">5,434</div>
<div class="t" style="left:703px;top:371px;width:48px;height:17px;line-height:17px;color:#0000ee;font-size:13px;text-align:center;letter-spacing:0.3px;">0,68 €</div>
<div class="t" style="left:752px;top:371px;width:48px;height:17px;line-height:17px;color:#0000ee;font-size:13px;text-align:center;overflow:visible;letter-spacing:0.3px;">3,146</div>
<div style="left:654px;top:388px;width:140px;height:18px;background:#99ccff;"></div>
<div class="t" style="left:654px;top:389px;width:48px;height:17px;line-height:17px;color:#0000ee;font-size:13px;text-align:center;letter-spacing:0.3px;">4,100</div>
<div class="t" style="left:703px;top:389px;width:48px;height:17px;line-height:17px;color:#0000ee;font-size:13px;text-align:center;letter-spacing:0.3px;">0,51 €</div>
<div class="t" style="left:752px;top:389px;width:48px;height:17px;line-height:17px;color:#0000ee;font-size:13px;text-align:center;overflow:visible;letter-spacing:0.3px;">3,835</div>
<div style="left:654px;top:406px;width:140px;height:18px;background:#cce6ff;"></div>
<div style="left:654px;top:424px;width:140px;height:18px;background:#99ccff;"></div>
<div style="left:654px;top:442px;width:140px;height:18px;background:#cce6ff;"></div>
<div class="t" style="left:654px;top:443px;width:48px;height:17px;line-height:17px;color:#0000ee;font-size:13px;text-align:center;letter-spacing:0.3px;">4,052</div>
<div class="t" style="left:703px;top:443px;width:48px;height:17px;line-height:17px;color:#0000ee;font-size:13px;text-align:center;letter-spacing:0.3px;">0,51 €</div>
<div class="t" style="left:752px;top:443px;width:48px;height:17px;line-height:17px;color:#0000ee;font-size:13px;text-align:center;overflow:visible;letter-spacing:0.3px;">1,853</div>
<div style="left:654px;top:460px;width:140px;height:18px;background:#99ccff;"></div>
<div class="t" style="left:654px;top:461px;width:48px;height:17px;line-height:17px;color:#0000ee;font-size:13px;text-align:center;letter-spacing:0.3px;">4,936</div>
<div class="t" style="left:703px;top:461px;width:48px;height:17px;line-height:17px;color:#0000ee;font-size:13px;text-align:center;letter-spacing:0.3px;">0,62 €</div>
<div class="t" style="left:752px;top:461px;width:48px;height:17px;line-height:17px;color:#0000ee;font-size:13px;text-align:center;overflow:visible;letter-spacing:0.3px;">2,116</div>
<div style="left:654px;top:478px;width:140px;height:18px;background:#cce6ff;"></div>
<div class="t" style="left:654px;top:479px;width:48px;height:17px;line-height:17px;color:#0000ee;font-size:13px;text-align:center;letter-spacing:0.3px;">4,870</div>
<div class="t" style="left:703px;top:479px;width:48px;height:17px;line-height:17px;color:#0000ee;font-size:13px;text-align:center;letter-spacing:0.3px;">0,61 €</div>
<div class="t" style="left:752px;top:479px;width:48px;height:17px;line-height:17px;color:#0000ee;font-size:13px;text-align:center;overflow:visible;letter-spacing:0.3px;">3,313</div>
<div style="left:654px;top:496px;width:140px;height:18px;background:#99ccff;"></div>
<div class="t" style="left:654px;top:497px;width:48px;height:17px;line-height:17px;color:#0000ee;font-size:13px;text-align:center;letter-spacing:0.3px;">5,840</div>
<div class="t" style="left:703px;top:497px;width:48px;height:17px;line-height:17px;color:#0000ee;font-size:13px;text-align:center;letter-spacing:0.3px;">0,73 €</div>
<div class="t" style="left:752px;top:497px;width:48px;height:17px;line-height:17px;color:#0000ee;font-size:13px;text-align:center;overflow:visible;letter-spacing:0.3px;">2,372</div>
<div style="left:654px;top:514px;width:140px;height:18px;background:#cce6ff;"></div>
<div class="t" style="left:654px;top:515px;width:48px;height:17px;line-height:17px;color:#0000ee;font-size:13px;text-align:center;letter-spacing:0.3px;">6,170</div>
<div class="t" style="left:703px;top:515px;width:48px;height:17px;line-height:17px;color:#0000ee;font-size:13px;text-align:center;letter-spacing:0.3px;">0,77 €</div>
<div class="t" style="left:752px;top:515px;width:48px;height:17px;line-height:17px;color:#0000ee;font-size:13px;text-align:center;overflow:visible;letter-spacing:0.3px;">2,325</div>
<div style="left:654px;top:532px;width:140px;height:18px;background:#99ccff;"></div>
<div class="t" style="left:654px;top:533px;width:48px;height:17px;line-height:17px;color:#0000ee;font-size:13px;text-align:center;letter-spacing:0.3px;">5,638</div>
<div class="t" style="left:703px;top:533px;width:48px;height:17px;line-height:17px;color:#0000ee;font-size:13px;text-align:center;letter-spacing:0.3px;">0,70 €</div>
<div class="t" style="left:752px;top:533px;width:48px;height:17px;line-height:17px;color:#0000ee;font-size:13px;text-align:center;overflow:visible;letter-spacing:0.3px;">2,115</div>
<div style="left:654px;top:550px;width:140px;height:18px;background:#cce6ff;"></div>
<div class="t" style="left:654px;top:551px;width:48px;height:17px;line-height:17px;color:#0000ee;font-size:13px;text-align:center;letter-spacing:0.3px;">4,170</div>
<div class="t" style="left:703px;top:551px;width:48px;height:17px;line-height:17px;color:#0000ee;font-size:13px;text-align:center;letter-spacing:0.3px;">0,52 €</div>
<div class="t" style="left:752px;top:551px;width:48px;height:17px;line-height:17px;color:#0000ee;font-size:13px;text-align:center;overflow:visible;letter-spacing:0.3px;">2,384</div>
<div style="left:654px;top:568px;width:140px;height:18px;background:#99ccff;"></div>
<div class="t" style="left:654px;top:569px;width:48px;height:17px;line-height:17px;color:#0000ee;font-size:13px;text-align:center;letter-spacing:0.3px;">4,400</div>
<div class="t" style="left:703px;top:569px;width:48px;height:17px;line-height:17px;color:#0000ee;font-size:13px;text-align:center;letter-spacing:0.3px;">0,55 €</div>
<div class="t" style="left:752px;top:569px;width:48px;height:17px;line-height:17px;color:#0000ee;font-size:13px;text-align:center;overflow:visible;letter-spacing:0.3px;">2,612</div>
</div>
<div class="dlg" style="left:191px;top:0;width:472px;height:540px;background:#f0f0f0;border:1px solid #ffb900;border-top:none;box-shadow:0 1px 12px rgba(0,0,0,.16);">
<div style="left:-1px;top:0px;width:472px;height:29px;background:#ffb900;"></div>
<div class="t" style="left:8px;top:6px;width:460px;height:16px;line-height:16px;color:#000;font-size:12px;text-align:left;letter-spacing:-0.11px;">Propriétés de la requête</div>
<div class="t" style="left:395px;top:4px;width:14px;height:18px;line-height:18px;color:#000;font-size:12px;text-align:center;font-size:14px;letter-spacing:0;">?</div>
<svg style="left:442px;top:8px" width="11" height="11" viewBox="0 0 11 11" stroke="#000" stroke-width="1.1" fill="none"><path d="M0.3 0.3L10.7 10.7M10.7 0.3L0.3 10.7"/></svg>
<div class="t" style="left:6px;top:38px;width:460px;height:16px;line-height:16px;color:#000;font-size:12px;text-align:left;letter-spacing:-0.27px;"><u>N</u>om de requête :</div>
<div style="left:130px;top:36px;width:334px;height:20px;background:#fff;border:1px solid #abadb3;"></div>
<div class="t" style="left:134px;top:38px;width:460px;height:16px;line-height:16px;color:#000;font-size:12px;text-align:left;letter-spacing:-0.58px;">suivi_tempo_2023</div>
<div class="t" style="left:6px;top:58px;width:460px;height:16px;line-height:16px;color:#000;font-size:12px;text-align:left;letter-spacing:-0.16px;">Descri<u>p</u>tion :</div>
<div style="left:130px;top:59px;width:334px;height:32px;background:#fff;border:1px solid #abadb3;"></div>
<div style="left:6px;top:120px;width:456px;height:380px;background:#fff;border:1px solid #d9d9d9;"></div>
<div style="left:78px;top:101px;width:69px;height:20px;background:#f0f0f0;border:1px solid #d9d9d9;"></div>
<div style="left:146px;top:101px;width:77px;height:20px;background:#f0f0f0;border:1px solid #d9d9d9;"></div>
<div style="left:6px;top:99px;width:73px;height:23px;background:#fff;border:1px solid #d9d9d9;border-bottom:none;"></div>
<div class="t" style="left:15px;top:103px;width:460px;height:16px;line-height:16px;color:#000;font-size:12px;text-align:left;letter-spacing:0.13px;"><u>U</u>tilisation</div>
<div class="t" style="left:86px;top:104px;width:460px;height:16px;line-height:16px;color:#000;font-size:12px;text-align:left;letter-spacing:0.2px;"><u>D</u>éfinition</div>
<div class="t" style="left:155px;top:104px;width:460px;height:16px;line-height:16px;color:#000;font-size:12px;text-align:left;letter-spacing:-0.13px;"><u>U</u>tilisé dans</div>
<div class="t" style="left:15px;top:137px;width:460px;height:16px;line-height:16px;color:#000;font-size:12px;text-align:left;letter-spacing:-0.04px;">Contrôle de l'actualisation</div>
<div style="left:156px;top:145px;width:299px;height:1px;background:#dcdcdc;"></div>
<div class="t" style="left:24px;top:157px;width:460px;height:16px;line-height:16px;color:#000;font-size:12px;text-align:left;letter-spacing:-0.13px;">Dernière actualisation :</div>
<div class="cb" style="left:24px;top:175px;width:13px;height:13px;"></div>
<svg style="left:24px;top:175px" width="13" height="13" viewBox="0 0 13 13" stroke="#333" stroke-width="1.1" fill="none"><path d="M2.4 6.3L4.9 9.3L11 2.7"/></svg>
<div class="t" style="left:41px;top:175px;width:460px;height:16px;line-height:16px;color:#000;font-size:12px;text-align:left;letter-spacing:-0.13px;">Acti<u>v</u>er l'actualisation en arrière-plan</div>
<div class="cb" style="left:24px;top:196px;width:13px;height:13px;"></div>
<div class="t" style="left:41px;top:195px;width:460px;height:16px;line-height:16px;color:#000;font-size:12px;text-align:left;letter-spacing:-0.22px;"><u>A</u>ctualiser toutes les</div>
<div class="t" style="left:222px;top:195px;width:460px;height:16px;line-height:16px;color:#6d6d6d;font-size:12px;text-align:left;letter-spacing:-0.15px;">minutes</div>
<div class="cb" style="left:24px;top:217px;width:13px;height:13px;"></div>
<svg style="left:24px;top:217px" width="13" height="13" viewBox="0 0 13 13" stroke="#333" stroke-width="1.1" fill="none"><path d="M2.4 6.3L4.9 9.3L11 2.7"/></svg>
<div class="t" style="left:41px;top:216px;width:460px;height:16px;line-height:16px;color:#000;font-size:12px;text-align:left;letter-spacing:-0.12px;">Actualiser les données lors de l'<u>o</u>uverture du fichier</div>
<div class="cb" style="left:42px;top:236px;width:13px;height:13px;"></div>
<div class="t" style="left:59.5px;top:235px;width:460px;height:16px;line-height:16px;color:#000;font-size:12px;text-align:left;letter-spacing:-0.2px;">Supprimer les <u>d</u>onnées de la plage de données externe avant d'enregistrer</div>
<div class="t" style="left:59.5px;top:248px;width:460px;height:16px;line-height:16px;color:#000;font-size:12px;text-align:left;letter-spacing:-0.38px;">le classeur</div>
<div class="cb" style="left:24px;top:268px;width:13px;height:13px;"></div>
<div class="t" style="left:41px;top:267px;width:460px;height:16px;line-height:16px;color:#000;font-size:12px;text-align:left;letter-spacing:-0.19px;">Act<u>u</u>aliser cette connexion à la commande Actualiser tout</div>
<div class="cb" style="left:24px;top:287px;width:13px;height:13px;"></div>
<div class="t" style="left:41px;top:286px;width:460px;height:16px;line-height:16px;color:#000;font-size:12px;text-align:left;letter-spacing:-0.24px;">Activer le chargement r<u>a</u>pide des données</div>
<div class="t" style="left:15px;top:309px;width:460px;height:16px;line-height:16px;color:#000;font-size:12px;text-align:left;letter-spacing:-0.5px;">Formats du serveur OLAP</div>
<div style="left:148px;top:317px;width:307px;height:1px;background:#dcdcdc;"></div>
<div class="t" style="left:24px;top:329px;width:460px;height:16px;line-height:16px;color:#6d6d6d;font-size:12px;text-align:left;letter-spacing:-0.26px;">Récupérer les formats suivants du serveur quand cette connexion est active :</div>
<div class="cb dis" style="left:24px;top:347px;width:13px;height:13px;"></div>
<div class="t" style="left:41px;top:346px;width:460px;height:16px;line-height:16px;color:#6d6d6d;font-size:12px;text-align:left;letter-spacing:-0.24px;">Format de nombre</div>
<div class="cb dis" style="left:148px;top:347px;width:13px;height:13px;"></div>
<div class="t" style="left:166px;top:346px;width:460px;height:16px;line-height:16px;color:#6d6d6d;font-size:12px;text-align:left;letter-spacing:-0.27px;">Couleur de remplissage</div>
<div class="cb dis" style="left:24px;top:366px;width:13px;height:13px;"></div>
<div class="t" style="left:41px;top:365px;width:460px;height:16px;line-height:16px;color:#6d6d6d;font-size:12px;text-align:left;letter-spacing:-0.5px;">Style</div>
<div class="cb dis" style="left:148px;top:366px;width:13px;height:13px;"></div>
<div class="t" style="left:166px;top:365px;width:460px;height:16px;line-height:16px;color:#6d6d6d;font-size:12px;text-align:left;letter-spacing:-0.13px;">Couleur du texte</div>
<div class="t" style="left:15px;top:388px;width:460px;height:16px;line-height:16px;color:#000;font-size:12px;text-align:left;letter-spacing:-0.46px;">Extraction OLAP</div>
<div style="left:102px;top:396px;width:353px;height:1px;background:#dcdcdc;"></div>
<div class="t" style="left:24px;top:411px;width:460px;height:16px;line-height:16px;color:#6d6d6d;font-size:12px;text-align:left;letter-spacing:-0.26px;">Nombre maximal d'enregistrements à collecter :</div>
<div class="t" style="left:15px;top:436px;width:460px;height:16px;line-height:16px;color:#000;font-size:12px;text-align:left;letter-spacing:-0.26px;">Langue</div>
<div style="left:59px;top:443px;width:396px;height:1px;background:#dcdcdc;"></div>
<div class="cb dis" style="left:24px;top:459px;width:13px;height:13px;"></div>
<div class="t" style="left:41px;top:457px;width:460px;height:16px;line-height:16px;color:#6d6d6d;font-size:12px;text-align:left;letter-spacing:-0.21px;">Récupérer les données et les erreurs dans la langue d'affichage d'Office le cas</div>
<div class="t" style="left:41px;top:470px;width:460px;height:16px;line-height:16px;color:#6d6d6d;font-size:12px;text-align:left;letter-spacing:-0.29px;">échéant</div>
<div style="left:159px;top:193px;width:53px;height:20px;background:#fff;border:1px solid #abadb3;"></div>
<div style="left:161px;top:195px;width:34px;height:16px;background:#f0f0f0;"></div>
<div style="left:195px;top:194px;width:15px;height:9px;background:#f0f0f0;border:1px solid #adadad;border-top:none;"></div>
<div style="left:195px;top:203px;width:15px;height:8px;background:#f3f3f3;"></div>
<svg style="left:199px;top:196px" width="7" height="14" viewBox="0 0 7 14"><path d="M0.5 4.2L3.5 1L6.5 4.2Z" fill="#000"/><path d="M0.5 9L3.5 12.2L6.5 9Z" fill="#6d6d6d"/></svg>
<div style="left:275px;top:409px;width:71px;height:20px;background:#fff;border:1px solid #abadb3;"></div>
<div style="left:277px;top:411px;width:52px;height:16px;background:#f0f0f0;"></div>
<div style="left:329px;top:410px;width:15px;height:9px;background:#f0f0f0;border:1px solid #adadad;border-top:none;"></div>
<div style="left:329px;top:419px;width:15px;height:8px;background:#f3f3f3;"></div>
<svg style="left:333px;top:412px" width="7" height="14" viewBox="0 0 7 14"><path d="M0.5 4.2L3.5 1L6.5 4.2Z" fill="#000"/><path d="M0.5 9L3.5 12.2L6.5 9Z" fill="#6d6d6d"/></svg>
<div class="t" style="left:162px;top:195px;width:460px;height:16px;line-height:16px;color:#6d6d6d;font-size:12px;text-align:left;letter-spacing:-0.38px;">60</div>
<div style="left:305px;top:509px;width:74px;height:22px;background:#e1e1e1;border:2px solid #0078d7;"></div>
<div style="left:308px;top:512px;width:68px;height:16px;border:1px dotted #000;"></div>
<div class="t" style="left:305px;top:512px;width:74px;height:16px;line-height:16px;color:#000;font-size:12px;text-align:center;">OK</div>
<div style="left:389px;top:509px;width:74px;height:22px;background:#e1e1e1;border:1px solid #adadad;"></div>
<div class="t" style="left:389px;top:512px;width:74px;height:16px;line-height:16px;color:#000;font-size:12px;text-align:center;letter-spacing:0.08px;">Annuler</div>
<svg style="left:459px;top:528px" width="11" height="11" viewBox="0 0 11 11" fill="#a0a0a0"><path d="M11 1.2V4.5L4.5 11H1.2Z"/><path d="M11 7.2V11H7.2Z"/></svg>
</div>
</body></html>
